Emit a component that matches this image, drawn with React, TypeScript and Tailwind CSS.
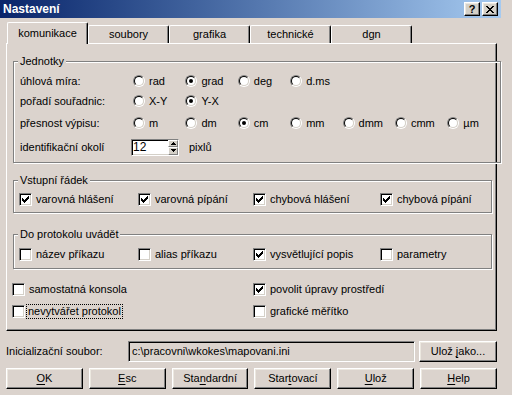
import React from "react";

const raised =
  "border border-t-white border-l-white border-r-black border-b-black shadow-[inset_-1px_-1px_0_#808080,inset_1px_1px_0_#ece8e0]";
const sunken =
  "border border-t-[#808080] border-l-[#808080] border-r-white border-b-white shadow-[inset_1px_1px_0_#000,inset_-1px_-1px_0_#d4d0c8]";

function Radio({ checked, label }: { checked?: boolean; label: string }) {
  return (
    <div className="flex items-center gap-[4px] whitespace-nowrap">
      <div className="w-[12px] h-[12px] rounded-full border border-t-[#808080] border-l-[#808080] border-r-white border-b-white shrink-0">
        <div className="w-full h-full rounded-full border border-t-black border-l-black border-r-[#d4d0c8] border-b-[#d4d0c8] bg-white flex items-center justify-center">
          {checked && <div className="w-[4px] h-[4px] rounded-full bg-black" />}
        </div>
      </div>
      <span>{label}</span>
    </div>
  );
}

function CheckMark() {
  const px: [number, number][] = [
    [6, 0],
    [5, 1], [6, 1],
    [0, 2], [4, 2], [5, 2], [6, 2],
    [0, 3], [1, 3], [3, 3], [4, 3], [5, 3],
    [0, 4], [1, 4], [2, 4], [3, 4], [4, 4],
    [1, 5], [2, 5], [3, 5],
    [2, 6],
  ];
  return (
    <svg width="7" height="7" viewBox="0 0 7 7" shapeRendering="crispEdges">
      {px.map(([x, y], i) => (
        <rect key={i} x={x} y={y} width="1" height="1" fill="#000" />
      ))}
    </svg>
  );
}

function Check({
  checked,
  label,
  focus,
}: {
  checked?: boolean;
  label: string;
  focus?: boolean;
}) {
  return (
    <div className="flex items-center gap-[4px] whitespace-nowrap">
      <div className={"w-[13px] h-[13px] bg-white shrink-0 flex items-center justify-center " + sunken}>
        {checked && <CheckMark />}
      </div>
      <span className={focus ? "outline outline-1 outline-dotted outline-black px-[1px] -ml-[2px] leading-[13px]" : ""}>
        {label}
      </span>
    </div>
  );
}

function Group({ title, children, className }: { title: string; children: React.ReactNode; className?: string }) {
  return (
    <fieldset
      className={
        "border border-[#808080] shadow-[inset_1px_1px_0_#fff,1px_1px_0_#fff] ml-[6px] mr-[4px] " + (className ?? "")
      }
    >
      <legend className="ml-[4px] px-[2px] leading-[13px] bg-[#dbd3cd]">{title}</legend>
      {children}
    </fieldset>
  );
}

function U({ children }: { children: React.ReactNode }) {
  return <span className="underline underline-offset-[2px]">{children}</span>;
}

function Btn({ children, className }: { children: React.ReactNode; className?: string }) {
  return (
    <div className={"h-[21px] flex items-center justify-center " + raised + " " + (className ?? "")}>
      <span>{children}</span>
    </div>
  );
}

export default function App() {
  const tabs = ["komunikace", "soubory", "grafika", "technické", "dgn"];
  return (
    <div className="w-[512px] h-[395px] overflow-hidden bg-[#dbd3cd] text-black text-[11px] font-['Liberation_Sans',Arial,sans-serif]">
      {/* title bar */}
      <div className="w-[501px] h-[18px] bg-gradient-to-r from-[#0a246a] to-[#a6caf0] flex items-center pl-[3px] pr-[3px]">
        <span className="text-white font-bold text-[12px] flex-1">Nastavení</span>
        <div className="flex gap-[2px]">
          <div className={"w-[16px] h-[14px] bg-[#d4d0c8] flex items-center justify-center font-bold text-[11px] " + raised}>?</div>
          <div className={"w-[16px] h-[14px] bg-[#d4d0c8] flex items-center justify-center " + raised}>
            <svg width="8" height="7" viewBox="0 0 8 7" shapeRendering="crispEdges">
              <path d="M0 0h2v1h-2zM6 0h2v1h-2zM1 1h2v1h-2zM5 1h2v1h-2zM2 2h4v1h-4zM3 3h2v1h-2zM2 4h4v1h-4zM1 5h2v1h-2zM5 5h2v1h-2zM0 6h2v1h-2zM6 6h2v1h-2z" fill="#000" />
            </svg>
          </div>
        </div>
      </div>

      <div className="px-[6px]">
        {/* tabs */}
        <div className="flex items-end h-[21px] mt-[4px] pl-[1px] relative z-10">
          {tabs.map((t, i) => (
            <div
              key={t}
              className={
                "w-[81px] flex items-center justify-center border-t border-l border-t-white border-l-white border-r border-r-black rounded-t-[2px] shadow-[inset_-1px_0_0_#808080] bg-[#dbd3cd] " +
                (i === 0 ? "h-[22px] -mb-px" : "h-[18px]")
              }
            >
              {t}
            </div>
          ))}
        </div>

        {/* panel */}
        <div className={"h-[288px] w-[491px] border border-t-white border-l-white border-r-black border-b-black shadow-[inset_-1px_-1px_0_#808080] pt-[11px]"}>
          <Group title="Jednotky" className="h-[108px]">
            <div className="pl-[6px] pt-[3px] grid grid-cols-[113px_repeat(7,52.4px)] items-center">
              <div className="h-[20px] flex items-center">úhlová míra:</div>
              <Radio label="rad" />
              <Radio label="grad" checked />
              <Radio label="deg" />
              <Radio label="d.ms" />
              <div />
              <div />
              <div />

              <div className="h-[20px] flex items-center">pořadí souřadnic:</div>
              <Radio label="X-Y" />
              <Radio label="Y-X" checked />
              <div />
              <div />
              <div />
              <div />
              <div />

              <div className="h-[24px] flex items-center">přesnost výpisu:</div>
              <Radio label="m" />
              <Radio label="dm" />
              <Radio label="cm" checked />
              <Radio label="mm" />
              <Radio label="dmm" />
              <Radio label="cmm" />
              <Radio label="µm" />
            </div>
            <div className="pl-[6px] h-[24px] flex items-center">
              <div className="w-[111px]">identifikační okolí</div>
              <div className={"w-[48px] h-[17px] bg-white flex " + sunken}>
                <div className="flex-1 text-[12px] leading-[15px] pl-[1px]">12</div>
                <div className="w-[10px] flex flex-col">
                  <div className={"flex-1 bg-[#d4d0c8] flex items-center justify-center " + "border border-t-white border-l-white border-r-[#808080] border-b-[#808080]"}>
                    <svg width="5" height="3" viewBox="0 0 5 3" shapeRendering="crispEdges"><path d="M2 0h1v1h1v1h1v1h-5v-1h1v-1h1z" fill="#000" /></svg>
                  </div>
                  <div className={"flex-1 bg-[#d4d0c8] flex items-center justify-center " + "border border-t-white border-l-white border-r-[#808080] border-b-[#808080]"}>
                    <svg width="5" height="3" viewBox="0 0 5 3" shapeRendering="crispEdges"><path d="M0 0h5v1h-1v1h-1v1h-1v-1h-1v-1h-1z" fill="#000" /></svg>
                  </div>
                </div>
              </div>
              <div className="ml-[10px]">pixlů</div>
            </div>
          </Group>

          <Group title="Vstupní řádek" className="mt-[11px] h-[39px]">
            <div className="pl-[5px] pt-[2px] h-[22px] grid grid-cols-[119px_115px_127px_auto] items-center">
              <Check checked label="varovná hlášení" />
              <Check checked label="varovná pípání" />
              <Check checked label="chybová hlášení" />
              <Check checked label="chybová pípání" />
            </div>
          </Group>

          <Group title="Do protokolu uvádět" className="mt-[15px] h-[41px]">
            <div className="pl-[5px] pt-[3px] h-[23px] grid grid-cols-[119px_115px_127px_auto] items-center">
              <Check label="název příkazu" />
              <Check label="alias příkazu" />
              <Check checked label="vysvětlující popis" />
              <Check label="parametry" />
            </div>
          </Group>

          <div className="pl-[5px] mt-[9px] grid grid-cols-[241px_auto] grid-rows-[22px_22px] items-center">
            <Check label="samostatná konsola" />
            <Check checked label="povolit úpravy prostředí" />
            <Check label="nevytvářet protokol" focus />
            <Check label="grafické měřítko" />
          </div>
        </div>

        {/* init file */}
        <div className="mt-[10px] flex items-center h-[21px]">
          <div className="w-[122px]">Inicializační soubor:</div>
          <div className={"w-[287px] h-[21px] flex items-center pl-[3px] " + sunken}>c:\pracovni\wkokes\mapovani.ini</div>
          <Btn className="ml-[4px] w-[78px]">
            Ulož <U>j</U>ako...
          </Btn>
        </div>

        {/* buttons */}
        <div className="mt-[6px] flex gap-[6px] w-[491px]">
          <Btn className="flex-1"><U>O</U>K</Btn>
          <Btn className="flex-1"><U>E</U>sc</Btn>
          <Btn className="flex-1">Sta<U>n</U>dardní</Btn>
          <Btn className="flex-1">Star<U>t</U>ovací</Btn>
          <Btn className="flex-1"><U>U</U>lož</Btn>
          <Btn className="flex-1"><U>H</U>elp</Btn>
        </div>
      </div>
    </div>
  );
}
